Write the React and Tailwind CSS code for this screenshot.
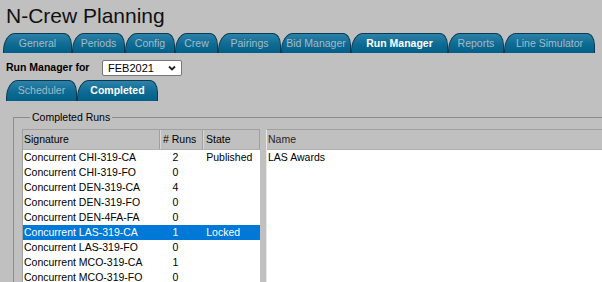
import { useState } from "react";

const mainTabs = [
    { label: "General", w: "w-[69px]" },
    { label: "Periods", w: "w-[53px]" },
    { label: "Config", w: "w-[50px]" },
    { label: "Crew", w: "w-[43px]" },
    { label: "Pairings", w: "w-[63px]" },
    { label: "Bid Manager", w: "w-[70px]" },
    { label: "Run Manager", w: "w-[97px]", active: true },
    { label: "Reports", w: "w-[56px]" },
    { label: "Line Simulator", w: "w-[91px]" },
];

const runs = [
    { sig: "Concurrent CHI-319-CA", n: 2, state: "Published" },
    { sig: "Concurrent CHI-319-FO", n: 0 },
    { sig: "Concurrent DEN-319-CA", n: 4 },
    { sig: "Concurrent DEN-319-FO", n: 0 },
    { sig: "Concurrent DEN-4FA-FA", n: 0 },
    { sig: "Concurrent LAS-319-CA", n: 1, state: "Locked" },
    { sig: "Concurrent LAS-319-FO", n: 0 },
    { sig: "Concurrent MCO-319-CA", n: 1 },
    { sig: "Concurrent MCO-319-FO", n: 0 },
];

function Tab({ label, w, active }) {
    return (
        <div
            className={`flex items-center justify-center h-full shrink-0 ${w} rounded-tl-[12px_18px] rounded-tr-[8px_12px] border border-b-0 border-[#0a3a50] bg-gradient-to-b from-[#2c82a9] via-[#0f6c94] to-[#015f89] ${
                active ? "text-white font-bold" : "text-[#a3bcc7]"
            }`}
        >
            {label}
        </div>
    );
}

export default function App() {
    const [selected, setSelected] = useState(5);

    return (
        <div className="w-[602px] h-[282px] overflow-hidden bg-[#c0c0c0] text-black text-[10.5px] font-['Liberation_Sans',Arial,sans-serif]">
            {/* Title */}
            <div className="h-[33px] pl-[6px] pt-[2px] text-[21px] leading-[28px] text-[#111]">N-Crew Planning</div>

            {/* Main tabs */}
            <div className="flex h-[20px] pl-[3px]">
                {mainTabs.map((t) => (
                    <Tab key={t.label} {...t} />
                ))}
            </div>

            {/* Period picker */}
            <div className="flex items-center h-[16px] mt-[7px] pl-[6px]">
                <span className="w-[96px] font-bold">Run Manager for</span>
                <div className="flex items-center justify-between w-[80px] h-[16px] pl-[5px] pr-[5px] bg-white border border-[#767676] rounded-[2px] text-[11px]">
                    <span>FEB2021</span>
                    <svg width="8" height="6" viewBox="0 0 8 6" fill="none" stroke="#222" strokeWidth="1.8">
                        <path d="M1 1.5l3 3 3-3" />
                    </svg>
                </div>
            </div>

            {/* Sub tabs */}
            <div className="flex h-[21px] mt-[4px] pl-[6px]">
                <Tab label="Scheduler" w="w-[71px]" />
                <Tab label="Completed" w="w-[81px]" active />
            </div>

            {/* Completed runs */}
            <fieldset className="mt-[10px] ml-[13px] w-[620px] h-[200px] border border-[#8c8c8c] pl-[8px]">
                <legend className="ml-[8px] px-[2px] leading-[13px]">Completed Runs</legend>
                <div className="flex mt-[5px] h-[180px]">
                    {/* Run list */}
                    <div className="w-[238px] shrink-0 border-t border-l border-[#a0a0a0] bg-white">
                        <div className="flex h-[20px] bg-[#c0c0c0] border-b border-[#b0b0b0]">
                            <div className="w-[137px] pl-[1px] pt-[2px] border-r border-[#a0a0a0]">Signature</div>
                            <div className="w-[43px] pl-[2px] pt-[2px] border-r border-l border-l-[#d8d8d8] border-r-[#a0a0a0]">
                                # Runs
                            </div>
                            <div className="w-[57px] pl-[2px] pt-[2px] border-r border-l border-l-[#d8d8d8] border-r-[#a0a0a0]">
                                State
                            </div>
                        </div>
                        {runs.map((r, i) => (
                            <div
                                key={r.sig}
                                onClick={() => setSelected(i)}
                                className={`flex h-[15px] leading-[15px] ${i === selected ? "bg-[#0078d7] text-white" : ""}`}
                            >
                                <div className="w-[137px] pl-[1px] whitespace-nowrap">{r.sig}</div>
                                <div className="w-[44px] pl-[13px]">{r.n}</div>
                                <div className="w-[57px] pl-[3px]">{r.state}</div>
                            </div>
                        ))}
                    </div>

                    <div className="w-[6px] shrink-0" />

                    {/* Name panel */}
                    <div className="flex-1 border-t border-l border-t-[#a0a0a0] border-l-[#e8e8e8] bg-white">
                        <div className="h-[20px] pl-[1px] pt-[2px] bg-[#c0c0c0] border-b border-[#b0b0b0] text-[#2a1f1f]">
                            Name
                        </div>
                        <div className="h-[15px] leading-[15px] pl-[1px]">LAS Awards</div>
                    </div>
                </div>
            </fieldset>
        </div>
    );
}
